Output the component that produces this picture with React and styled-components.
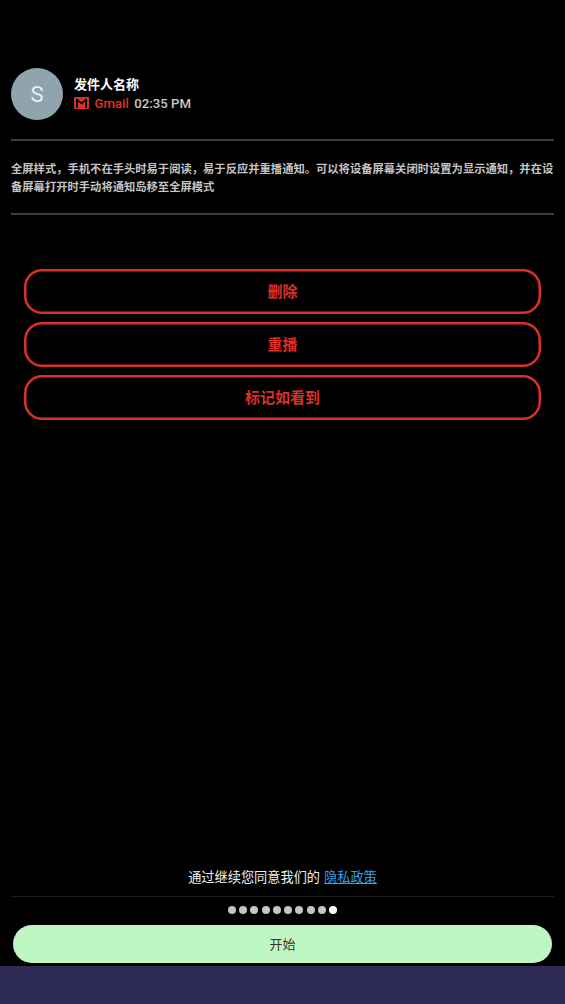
import React from "react";
import styled, { createGlobalStyle } from "styled-components";

const Global = createGlobalStyle`
  html, body { margin: 0; padding: 0; background: #000; }
  #root { width: 565px; height: 1004px; }
  * { box-sizing: border-box; }
`;
const CJK = `Roboto, "Noto Sans CJK SC", sans-serif`;

const Screen = styled.div`
  width: 565px; height: 1004px; display: flex; flex-direction: column;
  background: #000; font-family: ${CJK}; overflow: hidden;
`;
const Content = styled.main`
  flex: 1; display: flex; flex-direction: column; padding: 68px 11px 0 11px;
`;
const Header = styled.header`display: flex; align-items: center; gap: 11px; height: 52px; margin-bottom: 19px;`;
const Avatar = styled.div`
  width: 52px; height: 52px; border-radius: 50%; background: #90a4ae; color: #eceff1;
  display: flex; align-items: center; justify-content: center; font-size: 22px; font-weight: 400;
  padding-top: 1px;
`;
const HeaderText = styled.div`display: flex; flex-direction: column;`;
const Sender = styled.div`font-size: 13px; font-weight: 700; line-height: 18px; color: #fff;`;
const Meta = styled.div`display: flex; align-items: center; height: 18px; font-size: 13.2px; font-weight: 500;`;
const Source = styled.span`color: #e12f27; margin-left: 5.5px; font-weight: 500;`;
const Time = styled.span`color: #c9c9c9; margin-left: 5.5px;`;
const Rule = styled.hr`margin: 0; border: 0; height: 2px; flex: none; background: #3f3f3f;`;
const Body = styled.p`
  margin: 0; padding: 20px 0 0; font-size: 11.3px; line-height: 17.5px; font-weight: 700; color: #c4c4c4; height: 72px;
`;
const Actions = styled.div`display: flex; flex-direction: column; gap: 8px; padding: 54px 13px 0;`;
const Action = styled.button`
  height: 45px; border: 0; box-shadow: inset 0 0 0 2.5px #d9302a; border-radius: 18px; background: transparent;
  color: #d9302a; font: 700 15px ${CJK}; display: flex; align-items: center; justify-content: center;
  padding: 0 0 2px;
`;
const Footer = styled.footer`display: flex; flex-direction: column; align-items: stretch;`;
const Policy = styled.div`
  height: 30px; margin: 0 11px; display: flex; align-items: center; justify-content: center;
  border-bottom: 1px solid #1c1c1c; color: #f0f0f0; font-size: 13.2px; gap: 4px; padding-bottom: 10px;
`;
const PolicyLink = styled.a`color: #3a9fe6; text-decoration: underline;`;
const Dots = styled.div`height: 28px; display: flex; align-items: center; justify-content: center; gap: 3.3px; padding-bottom: 2px;`;
const Dot = styled.span`
  width: 8px; height: 8px; border-radius: 50%; background: ${p => (p.$active ? "#fff" : "#c4c4c4")};
`;
const StartWrap = styled.div`padding: 0 13px; height: 41px;`;
const Start = styled.button`
  width: 100%; height: 38px; border: 0; border-radius: 19px; background: #bff7c4; color: #333;
  font: 400 13px ${CJK}; padding: 0 0 2px; display: flex; align-items: center; justify-content: center;
`;
const NavBar = styled.div`height: 38px; background: #2e2c54;`;

const GmailIcon = () => (
  <svg width="15" height="12" viewBox="0 0 15 12" aria-hidden="true">
    <path fill="#d9302a" fillRule="evenodd" d="M0 1.2C0 .5.5 0 1.2 0h12.6c.7 0 1.2.5 1.2 1.2v9.6c0 .7-.5 1.2-1.2 1.2H1.2C.5 12 0 11.5 0 10.8V1.2zm2 .2v9.4h1.8V4.6l3.7 2.9 3.7-2.9v6.2H13V1.4h-.6L7.5 5.2 2.6 1.4H2z" />
  </svg>
);

export default function App() {
  return (
    <Screen>
      <Global />
      <Content>
        <Header>
          <Avatar>S</Avatar>
          <HeaderText>
            <Sender>发件人名称</Sender>
            <Meta>
              <GmailIcon />
              <Source>Gmail</Source>
              <Time>02:35 PM</Time>
            </Meta>
          </HeaderText>
        </Header>
        <Rule />
        <Body>全屏样式，手机不在手头时易于阅读，易于反应并重播通知。可以将设备屏幕关闭时设置为显示通知，并在设备屏幕打开时手动将通知岛移至全屏模式</Body>
        <Rule />
        <Actions>
          <Action>删除</Action>
          <Action>重播</Action>
          <Action>标记如看到</Action>
        </Actions>
      </Content>
      <Footer>
        <Policy>通过继续您同意我们的 <PolicyLink>隐私政策</PolicyLink></Policy>
        <Dots>
          {Array.from({ length: 10 }, (_, i) => <Dot key={i} $active={i === 9} />)}
        </Dots>
        <StartWrap><Start>开始</Start></StartWrap>
        <NavBar />
      </Footer>
    </Screen>
  );
}
